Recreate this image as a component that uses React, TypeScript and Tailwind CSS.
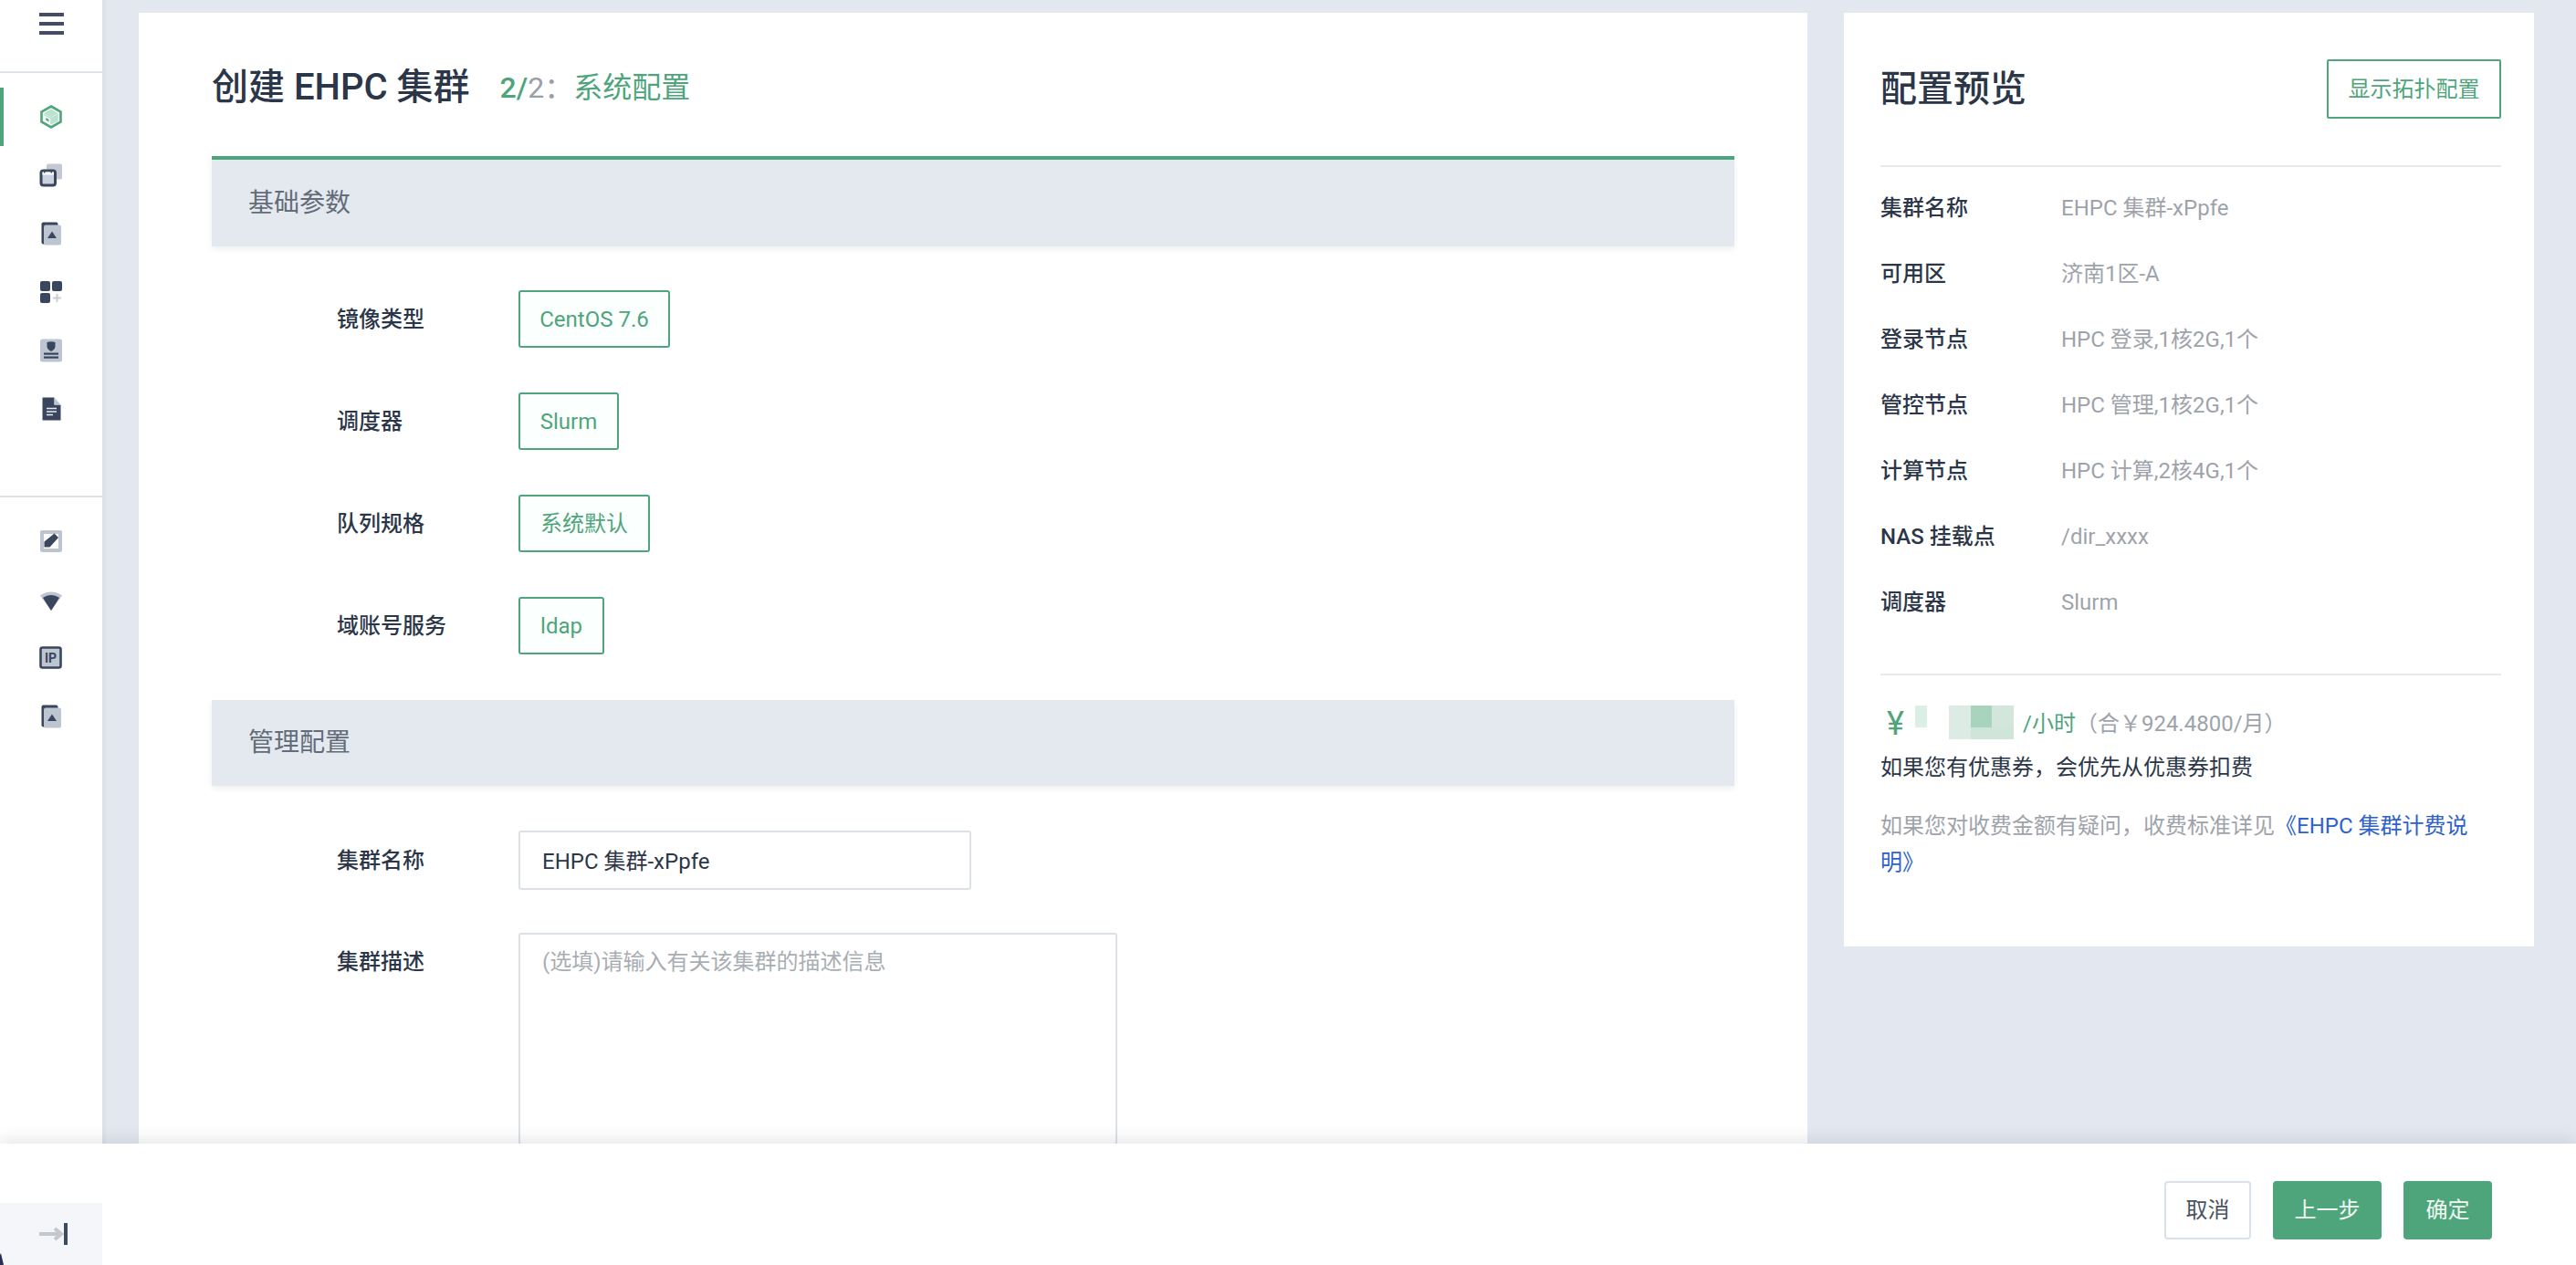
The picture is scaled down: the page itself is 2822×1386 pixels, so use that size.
import type { ReactNode } from 'react'

const DARK = '#39465e'
const LIGHT = '#bcc5d0'
const GREEN = '#4fa57b'

function Icon({ children }: { children: ReactNode }) {
  return (
    <svg width="26" height="26" viewBox="0 0 26 26" fill="none">
      {children}
    </svg>
  )
}

const HexIcon = () => (
  <Icon>
    <path d="M13 1.500 23.500 7.500v11L13 24.500 2.500 18.500v-11z" fill="#fff" stroke={GREEN} strokeWidth="2.600" />
    <path d="M13 4.500 20.800 9v8.500L13 21.800 5.200 17.500V9z" fill="#b9e3cf" />
    <path d="M5.200 11.500l7 3.500v6.500l-7-4z" fill="#fff" />
    <path d="M7.200 14l3.300 1.700v2.800L7.200 16.600z" fill={GREEN} />
    <path d="M5.200 9.500l8 4 7.600-4.500" stroke="#d6efe3" strokeWidth="1" />
  </Icon>
)

const CalendarIcon = () => (
  <Icon>
    <rect x="8" y="0.500" width="17" height="17" rx="2" fill="#c3c8d2" />
    <rect x="2" y="8" width="15.500" height="16" rx="2.500" fill="#c9d2de" stroke={DARK} strokeWidth="3" />
    <rect x="3.500" y="9.500" width="12.500" height="3" fill="#fff" />
    <rect x="5" y="7.500" width="1.500" height="3" fill={DARK} />
    <rect x="12.500" y="7.500" width="1.500" height="3" fill={DARK} />
  </Icon>
)

const ImageIcon = () => (
  <Icon>
    <rect x="2.500" y="0.500" width="18" height="24" rx="2" fill={DARK} />
    <rect x="5" y="3.500" width="19" height="22" rx="2" fill={LIGHT} />
    <path d="M14 10.500 19 18H9z" fill={DARK} />
  </Icon>
)

const GridPlusIcon = () => (
  <Icon>
    <rect x="1" y="1" width="11" height="11" rx="2" fill={DARK} />
    <rect x="14" y="1" width="11" height="11" rx="2" fill={DARK} />
    <rect x="1" y="14" width="11" height="11" rx="2" fill={DARK} />
    <path d="M19.500 15v9M15 19.500h9" stroke="#c9ced6" strokeWidth="2" />
  </Icon>
)

const ShieldCardIcon = () => (
  <Icon>
    <rect x="1" y="0.500" width="24" height="25" rx="2.500" fill={LIGHT} />
    <path d="M8.500 4c3-1 6-1 9 0v4.500c0 2.600-2 4.400-4.500 5.500-2.500-1.100-4.500-2.900-4.500-5.500z" fill={DARK} />
    <rect x="5" y="15.500" width="16" height="2.200" fill={DARK} />
    <rect x="5" y="19.500" width="16" height="2.200" fill={DARK} />
  </Icon>
)

const DocIcon = () => (
  <Icon>
    <path d="M3.500 0.500h13v8h7v17h-20z" fill={DARK} />
    <path d="M16.500 0.500l7 8h-7z" fill={LIGHT} />
    <path d="M8 12.500h11M8 16h11M8 19.500h7" stroke="#e8ecf1" strokeWidth="1.500" />
  </Icon>
)

const PencilIcon = () => (
  <Icon>
    <rect x="1" y="1" width="24" height="24" rx="2" fill={LIGHT} />
    <rect x="5" y="5" width="16" height="16" fill="#fff" />
    <path d="M16.500 4.500 21 9l-9.500 10.500H5.500v-6z" fill={DARK} />
  </Icon>
)

const WifiIcon = () => (
  <Icon>
    <path d="M1 8.500C8 3 18 3 25 8.500L13 25z" fill={LIGHT} />
    <path d="M4 11C9.500 7 16.500 7 22 11L13 25z" fill={DARK} />
  </Icon>
)

const IpIcon = () => (
  <Icon>
    <rect x="1.500" y="1.500" width="22" height="22" rx="2" fill={LIGHT} stroke={DARK} strokeWidth="2.600" />
    <text x="12.500" y="18" textAnchor="middle" fontSize="14" fontWeight="700" fill={DARK} fontFamily="Roboto, sans-serif">
      IP
    </text>
  </Icon>
)

const topNav = [HexIcon, CalendarIcon, ImageIcon, GridPlusIcon, ShieldCardIcon, DocIcon]
const bottomNav = [PencilIcon, WifiIcon, IpIcon, ImageIcon]

const summary = [
  ['集群名称', 'EHPC 集群-xPpfe'],
  ['可用区', '济南1区-A'],
  ['登录节点', 'HPC 登录,1核2G,1个'],
  ['管控节点', 'HPC 管理,1核2G,1个'],
  ['计算节点', 'HPC 计算,2核4G,1个'],
  ['NAS 挂载点', '/dir_xxxx'],
  ['调度器', 'Slurm'],
]

const options = [
  ['镜像类型', 'CentOS 7.6', 'w-[166px]'],
  ['调度器', 'Slurm', 'w-[110px]'],
  ['队列规格', '系统默认', 'w-[144px]'],
  ['域账号服务', 'ldap', 'w-[94px]'],
]

function Section({ title, accent }: { title: string; accent?: boolean }) {
  return (
    <div
      className={`flex items-center pl-10 bg-[#e4e9ef] text-[28px] text-[#636c79] shadow-[0_3px_6px_rgba(40,50,70,0.08)] ${
        accent ? 'h-[99px] border-t-[4px] border-[#4fa57b]' : 'h-[94px]'
      }`}
    >
      {title}
    </div>
  )
}

function Sidebar() {
  return (
    <aside className="w-[112px] shrink-0 h-full bg-white border-r-[4px] border-[#dde2e8] box-content -mr-[4px] z-10 flex flex-col">
      <div className="h-[80px] border-b-[2px] border-[#dde1e8] flex justify-center pt-[14px]">
        <div className="w-[27px] flex flex-col gap-[6px]">
          <div className="h-[4px] bg-[#444e60]" />
          <div className="h-[4px] bg-[#444e60]" />
          <div className="h-[4px] bg-[#444e60]" />
        </div>
      </div>
      <nav className="pt-[16px] h-[465px] border-b-[2px] border-[#dde1e8]">
        {topNav.map((Item, i) => (
          <div key={i} className={`h-[64px] flex items-center justify-center ${i === 0 ? 'border-l-[4px] border-[#4fa57b] pr-[4px]' : ''}`}>
            <Item />
          </div>
        ))}
      </nav>
      <nav className="pt-[16px]">
        {bottomNav.map((Item, i) => (
          <div key={i} className="h-[64px] flex items-center justify-center">
            <Item />
          </div>
        ))}
      </nav>
    </aside>
  )
}

function Price() {
  return (
    <div className="relative flex items-center h-[40px] text-[24px] leading-[40px]">
      <span className="w-[156px] pl-[7px] text-[#4fa57b] text-[36px] leading-none">¥</span>
      <span className="text-[#4fa57b]">/小时</span>
      <span className="text-[#9ea3ab]">（合￥924.4800/月）</span>
      {/* mosaic over the hidden amount */}
      <div className="absolute left-[38px] top-0 w-[13px] h-[24px] bg-[#dcefe6]" />
      <div className="absolute left-[75px] top-0 w-[71px] h-[37px] grid grid-cols-3 grid-rows-[24px_13px]">
        <div className="bg-[#dcece4]" />
        <div className="bg-[#a8d3bd]" />
        <div className="bg-[#d3e6dc]" />
        <div className="bg-[#dcece4]" />
        <div className="bg-[#cfe5d9]" />
        <div className="bg-[#cfe5d9]" />
      </div>
    </div>
  )
}

export default function App() {
  return (
    <div
      className="relative h-screen w-full overflow-hidden flex bg-[#e3e8f0] text-[#2b3648]"
      style={{ fontFamily: 'Roboto, "Noto Sans CJK SC", sans-serif' }}
    >
      <Sidebar />

      <main className="flex-1 flex gap-10 pl-10 pt-[14px] items-start">
        <section className="w-[1828px] h-[1400px] bg-white px-20 shrink-0">
          <div className="h-[157px] flex items-center pt-[7px]">
            <h1 className="text-[40px] font-medium text-[#2b3648] mr-[33px]">创建 EHPC 集群</h1>
            <div className="text-[32px] text-[#4fa57b]">
              <span className="font-medium">2/</span>
              <span className="text-[#9a9ea8]">2：</span>系统配置
            </div>
          </div>

          <Section title="基础参数" accent />

          <div className="pt-[48px] h-[497px] flex flex-col gap-[49px]">
            {options.map(([label, value, width]) => (
              <div key={label} className="flex items-center h-[63px]">
                <div className="w-[336px] pl-[137px] text-[24px] font-medium">{label}</div>
                <div className={`${width} h-[63px] flex items-center justify-center border-2 border-[#4fa57b] rounded-[3px] bg-[#fbfffd] text-[24px] text-[#4fa57b]`}>
                  {value}
                </div>
              </div>
            ))}
          </div>

          <Section title="管理配置" />

          <div className="pt-[49px]">
            <div className="flex items-center h-[65px]">
              <div className="w-[336px] pl-[137px] text-[24px] font-medium">集群名称</div>
              <input
                readOnly
                value="EHPC 集群-xPpfe"
                className="w-[496px] h-[65px] px-6 pb-[2px] text-[24px] text-[#2b3648] border-2 border-[#dce1e7] rounded-[3px] outline-none"
              />
            </div>
            <div className="flex items-start mt-[47px]">
              <div className="w-[336px] pl-[137px] text-[24px] font-medium pt-[14px]">集群描述</div>
              <div className="w-[656px] h-[320px] px-6 pt-[12px] text-[24px] text-[#a9adb4] border-2 border-[#dce1e7] rounded-[3px]">
                (选填)请输入有关该集群的描述信息
              </div>
            </div>
          </div>
        </section>

        <section className="w-[756px] h-[1023px] bg-white pl-10 pr-[36px] shrink-0">
          <div className="h-[169px] flex items-center justify-between border-b-2 border-[#e6e9ee]">
            <h2 className="text-[40px] font-medium">配置预览</h2>
            <button className="w-[191px] h-[65px] border-2 border-[#4fa57b] rounded-[2px] text-[24px] text-[#4fa57b]">显示拓扑配置</button>
          </div>

          <dl className="pt-[9px] h-[557px] border-b-2 border-[#e6e9ee]">
            {summary.map(([k, v]) => (
              <div key={k} className="flex items-center h-[72px] text-[24px]">
                <dt className="w-[198px] font-medium">{k}</dt>
                <dd className="text-[#9ea3ab]">{v}</dd>
              </div>
            ))}
          </dl>

          <div className="pt-[33px]">
            <Price />
            <p className="mt-[8px] text-[24px] leading-[40px]">如果您有优惠券，会优先从优惠券扣费</p>
            <p className="mt-[24px] pr-[4px] text-[24px] leading-[40px] text-[#9ea3ab]">
              如果您对收费金额有疑问，收费标准详见
              <a className="text-[#2f62c9]">《EHPC 集群计费说明》</a>
            </p>
          </div>
        </section>
      </main>

      <footer className="absolute left-0 right-0 bottom-0 z-20 h-[133px] bg-white shadow-[0_-6px_14px_rgba(40,50,70,0.1)] flex items-center justify-end gap-[24px] pr-[92px] pt-[13px]">
        <div className="absolute left-0 bottom-0 w-[112px] h-[68px] bg-[#f4f6fa] flex items-center justify-center pl-[6px]">
          <svg width="34" height="26" viewBox="0 0 34 26" fill="none">
            <path d="M1 13h24M18 7l7 6-7 6" stroke="#c3c8cd" strokeWidth="4" />
            <rect x="28" y="1" width="4" height="24" fill="#3d4b5c" />
          </svg>
          <svg className="absolute left-0 bottom-0" width="4" height="13" viewBox="0 0 4 13">
            <path d="M0 13V2l1 -2 3 13z" fill="#2a2f55" />
          </svg>
        </div>
        <button className="w-[95px] h-[64px] border-2 border-[#dbe1e8] rounded-[4px] bg-white text-[24px] text-[#4a5364]">取消</button>
        <button className="w-[119px] h-[64px] rounded-[4px] bg-[#4fa57b] text-[24px] text-[#f1f8f4]">上一步</button>
        <button className="w-[97px] h-[64px] rounded-[4px] bg-[#4fa57b] text-[24px] text-[#f1f8f4]">确定</button>
      </footer>
    </div>
  )
}
